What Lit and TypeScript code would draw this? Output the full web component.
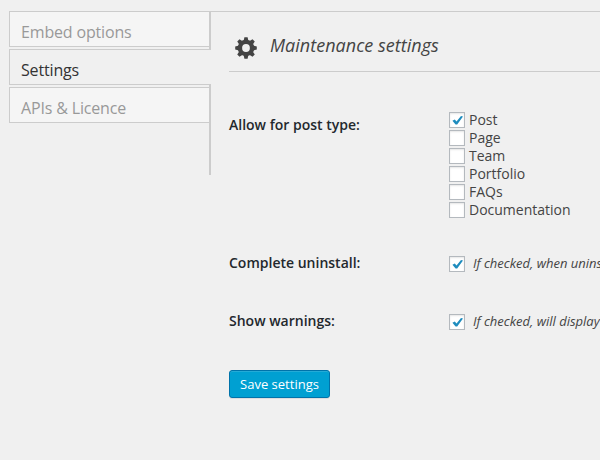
import { LitElement, html, css, svg } from "lit";
import { customElement, property } from "lit/decorators.js";
import { classMap } from "lit/directives/class-map.js";

@customElement("check-box")
class CheckBox extends LitElement {
  @property({ type: Boolean }) checked = false;

  static styles = css`
    :host {
      display: block;
      box-sizing: border-box;
      flex: none;
      width: 16px;
      height: 16px;
      border: 1px solid #b4b9be;
      background: #fff;
      box-shadow: inset 0 1px 2px rgba(0, 0, 0, 0.1);
    }
    svg {
      display: block;
      width: 14px;
      height: 14px;
    }
  `;

  render() {
    return this.checked
      ? html`<svg viewBox="0 0 14 14">
          <path
            fill="#1e8cbe"
            d="M11 3 L13 3.5 L7.2 11.6 L5.6 11.6 L2.4 7.8 L4.8 6.6 L6.5 8.4 Z"
          />
        </svg>`
      : null;
  }
}

@customElement("app-root")
class AppRoot extends LitElement {
  private tabs = ["Embed options", "Settings", "APIs & Licence"];
  private current = "Settings";
  private postTypes = ["Post", "Page", "Team", "Portfolio", "FAQs", "Documentation"];
  private options = [
    { label: "Complete uninstall:", note: "If checked, when uninstalling" },
    { label: "Show warnings:", note: "If checked, will display" },
  ];

  static styles = css`
    :host {
      display: flex;
      box-sizing: border-box;
      width: 600px;
      height: 460px;
      padding: 11px 0 0 9px;
      overflow: hidden;
      background: #f0f0f0;
      color: #444;
      font-family: "Open Sans", "Noto Sans", sans-serif;
      font-size: 14px;
    }
    .tabs {
      display: flex;
      flex-direction: column;
      flex: none;
      width: 202px;
      height: 164px;
    }
    .tab {
      box-sizing: border-box;
      flex: none;
      height: 38px;
      padding-bottom: 2px;
      border-right: 2px solid #ccc;
    }
    .face {
      box-sizing: border-box;
      height: 36px;
      padding: 6px 0 0 11px;
      border: 1px solid #ccc;
      border-right: 0;
      background: #f5f5f5;
      color: #999;
      font-size: 16px;
      letter-spacing: -0.16px;
      line-height: 28px;
      white-space: nowrap;
    }
    .current {
      height: 36px;
      padding: 0;
      border-right: 0;
    }
    .current .face {
      background: #f0f0f0;
      color: #333;
    }
    .rail {
      flex: 1;
      border-right: 2px solid #ccc;
    }
    .spacer {
      flex: none;
      height: 2px;
      border-right: 2px solid #ccc;
    }
    .panel {
      flex: 1;
      min-width: 0;
      padding-left: 18px;
      border-top: 1px solid #ccc;
    }
    .title {
      display: flex;
      box-sizing: border-box;
      height: 60px;
      padding: 0 0 0 6px;
      border-bottom: 1px solid #ccc;
    }
    .gear {
      flex: none;
      width: 22px;
      height: 22px;
      margin-top: 25px;
    }
    .title h2 {
      margin: 20px 0 0 13px;
      color: #444;
      font-size: 18px;
      font-weight: 400;
      font-style: italic;
      letter-spacing: 0.02px;
      line-height: 26px;
      white-space: nowrap;
    }
    .row {
      display: grid;
      grid-template-columns: 220px 1fr;
      white-space: nowrap;
    }
    .types {
      height: 108px;
      margin-top: 39px;
    }
    .label {
      color: #23282d;
      font-weight: 600;
      line-height: 20px;
    }
    .types .label {
      padding-top: 4px;
    }
    .item {
      display: flex;
      align-items: center;
      gap: 4px;
      height: 18px;
      line-height: 18px;
    }
    .option {
      height: 20px;
      margin-top: 38px;
    }
    .first {
      margin-top: 34px;
    }
    .option .item {
      height: 20px;
      gap: 8px;
      font-size: 13px;
      font-style: italic;
    }
    .option check-box {
      margin-top: 2px;
    }
    .save {
      box-sizing: border-box;
      display: block;
      width: 101px;
      height: 28px;
      margin: 39px 0 0;
      padding: 0;
      border: 1px solid #0073aa;
      border-radius: 3px;
      background: #00a0d2;
      box-shadow: inset 0 1px 0 rgba(120, 200, 230, 0.3), 0 1px 0 rgba(0, 0, 0, 0.08);
      color: #fff;
      font: 13px/26px "Open Sans", "Noto Sans", sans-serif;
      white-space: nowrap;
    }
  `;

  private gear() {
    return html`<svg class="gear" viewBox="-11 -11 22 22">
      ${[0, 45, 90, 135].map(
        (a) =>
          svg`<path d="M-1.6 -10.8 H1.6 L2.4 -7 V7 L1.6 10.8 H-1.6 L-2.4 7 V-7 Z" fill="#444" transform="rotate(${a})" />`
      )}
      <circle r="8.3" fill="#444" />
      <circle r="3.9" fill="#f0f0f0" />
    </svg>`;
  }

  render() {
    return html`
      <nav class="tabs">
        ${this.tabs.map((t) => {
          const on = t === this.current;
          return html`
            <div class=${classMap({ tab: true, current: on })}>
              <div class="face">${t}</div>
            </div>
            ${on ? html`<div class="spacer"></div>` : null}
          `;
        })}
        <div class="rail"></div>
      </nav>
      <main class="panel">
        <header class="title">
          ${this.gear()}
          <h2>Maintenance settings</h2>
        </header>
        <section class="row types">
          <div class="label">Allow for post type:</div>
          <div>
            ${this.postTypes.map(
              (p) => html`<div class="item"><check-box ?checked=${p === "Post"}></check-box>${p}</div>`
            )}
          </div>
        </section>
        ${this.options.map(
          (o, i) => html`<section class=${classMap({ row: true, option: true, first: i === 0 })}>
            <div class="label">${o.label}</div>
            <div class="item"><check-box checked></check-box>${o.note}</div>
          </section>`
        )}
        <button class="save">Save settings</button>
      </main>
    `;
  }
}
